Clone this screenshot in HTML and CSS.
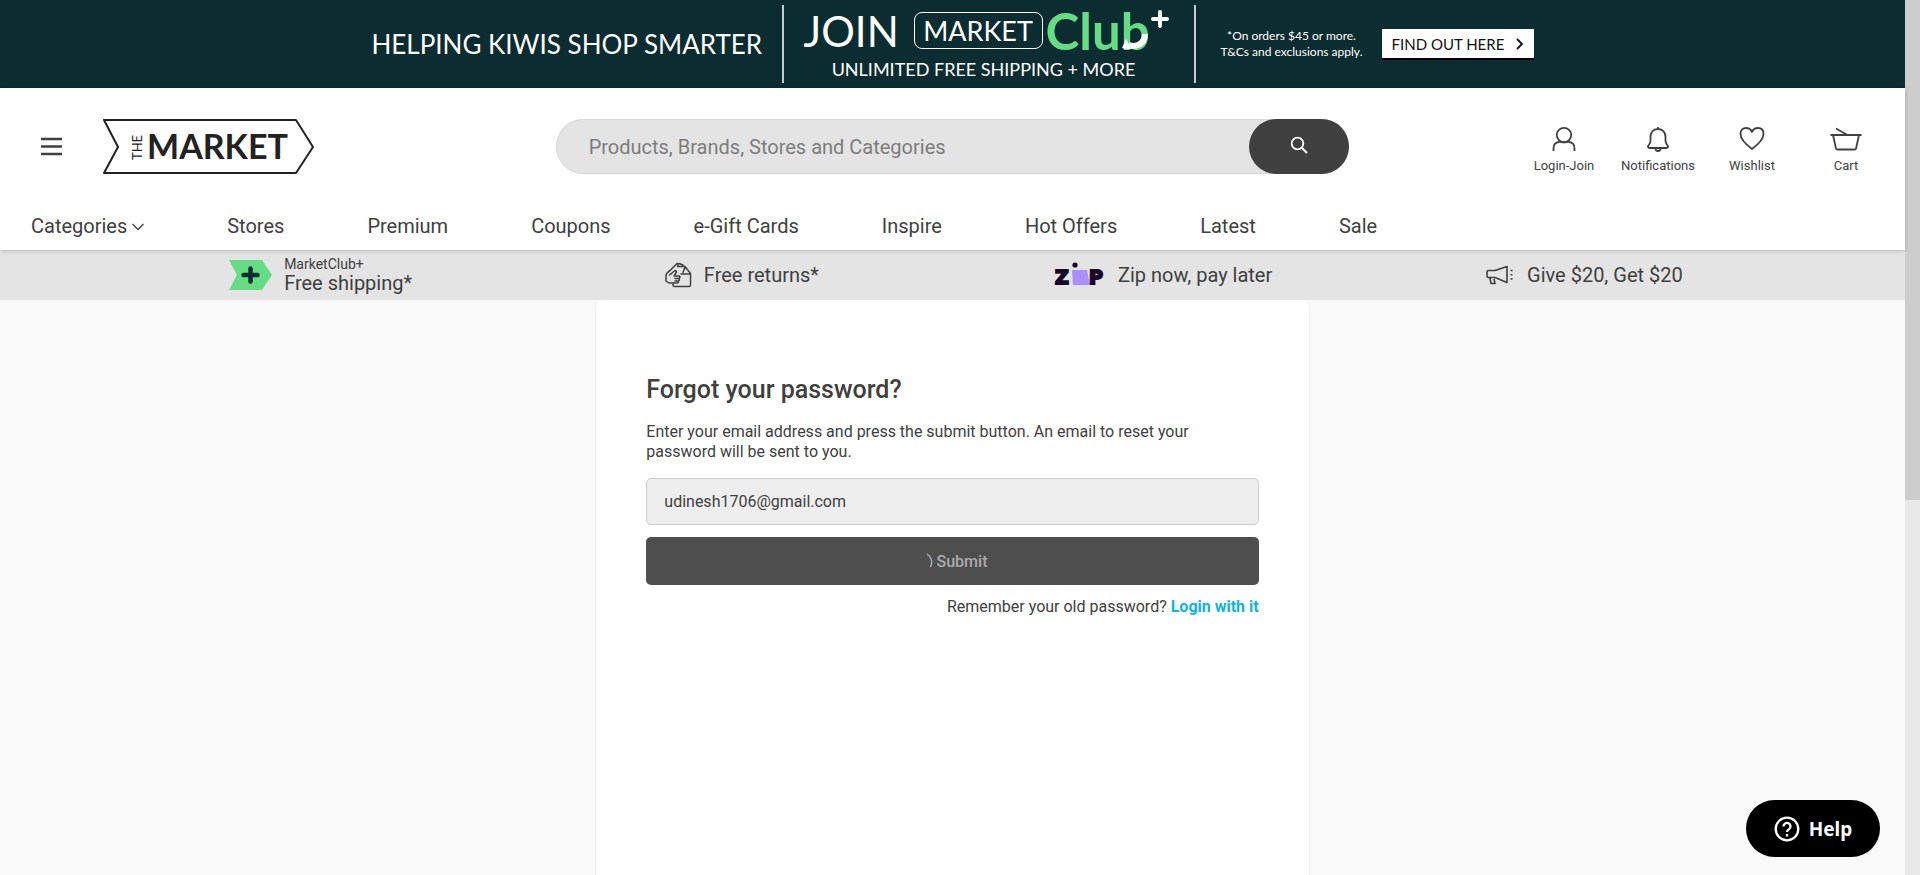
FILE: index.html
```html
<!DOCTYPE html>
<html lang="en">
<head>
<meta charset="utf-8">
<meta name="viewport" content="width=device-width, initial-scale=1">
<title>Forgot your password? | TheMarket</title>
<link rel="stylesheet" href="styles.css">
</head>
<body>
<div class="page">
  <aside class="banner">
    <p class="banner-tagline">HELPING KIWIS SHOP SMARTER</p>
    <div class="banner-join">
      <div class="join-row">
        <span class="join-word">JOIN</span>
        <span class="market-box">MARKET</span>
        <span class="club">Club<svg class="club-swoosh" width="30" height="26" viewBox="0 0 30 26" aria-hidden="true"><path d="M25 8C25 17 17 22 9 19" fill="none" stroke="#fff" stroke-width="6"/><path d="M2 22L6 13 12 23Q6 24 2 22z" fill="#fff"/></svg></span>
        <svg class="club-plus" width="20" height="20" viewBox="0 0 20 20" aria-hidden="true"><path d="M10 3v14M3 10h14" stroke="#fff" stroke-width="4" stroke-linecap="round"/></svg>
      </div>
      <p class="join-sub">UNLIMITED FREE SHIPPING + MORE</p>
    </div>
    <p class="banner-terms">*On orders $45 or more.<br>T&amp;Cs and exclusions apply.</p>
    <a class="banner-cta" href="#">FIND OUT HERE
      <svg width="8" height="12" viewBox="0 0 8 12" aria-hidden="true"><path d="M1 1l5 5-5 5" fill="none" stroke="#111" stroke-width="1.800"/></svg>
    </a>
  </aside>

  <header class="header">
    <div class="header-main">
      <div class="brand">
        <button class="menu-button" type="button" aria-label="Menu">
          <svg width="22" height="20" viewBox="0 0 22 20"><path d="M0 2h21M0 9.500h21M0 17h21" stroke="#404040" stroke-width="2.400"/></svg>
        </button>
        <a class="logo" href="#" aria-label="The Market">
          <svg width="213" height="56" viewBox="0 0 213 56">
            <path d="M2 1H194L211 28 194 54H2L16 28Z" fill="none" stroke="#222" stroke-width="2" stroke-linejoin="round"/>
            <text class="logo-the" transform="translate(40 41) rotate(-90)">THE</text>
            <text class="logo-market" x="45" y="40">MARKET</text>
          </svg>
        </a>
      </div>
      <form class="search">
        <input class="search-input" type="search" aria-label="Search" placeholder="Products, Brands, Stores and Categories">
        <button class="search-button" type="button" aria-label="Search">
          <svg width="18" height="18" viewBox="0 0 18 18"><circle cx="7.500" cy="7.500" r="5.800" fill="none" stroke="#fff" stroke-width="1.800"/><path d="M11.500 11.500l5.500 5.500" stroke="#fff" stroke-width="2"/></svg>
        </button>
      </form>
      <div class="actions">
        <a class="action" href="#">
          <svg width="32" height="26" viewBox="0 0 32 26"><circle cx="16" cy="9" r="7.200"/><path d="M5.500 25v-2.500q0-6 5.500-6.500l1.500-.4q3.500 1.600 7 0l1.500.4q5.500.5 5.500 6.500V25"/></svg>
          Login-Join
        </a>
        <a class="action" href="#">
          <svg width="32" height="26" viewBox="0 0 32 26"><path d="M16 1v2M16 3c-5 0-7.500 3.500-7.500 8v4c0 3-2.500 4-2.500 5.500S7 22 8 22h16c1 0 2-.2 2-1.500S23.500 18 23.500 15v-4c0-4.500-2.500-8-7.500-8z"/><path d="M13.500 22.500a2.500 2.500 0 0 0 5 0"/></svg>
          Notifications
        </a>
        <a class="action" href="#">
          <svg width="32" height="26" viewBox="0 0 32 26"><path d="M16 23C10 18.500 4.500 13.500 4.500 8c0-4 2.500-6 5.500-6 2.800 0 5 1.500 6 4 1-2.500 3.200-4 6-4 3 0 5.500 2 5.500 6 0 5.500-5.500 10.500-11.500 15z"/></svg>
          Wishlist
        </a>
        <a class="action" href="#">
          <svg width="32" height="26" viewBox="0 0 32 26"><path d="M0.500 9h31M3 9l3 13.500q.3 1 1.200 1H24.800q.9 0 1.200-1L29 9M6 2.500L17.500 9"/></svg>
          Cart
        </a>
      </div>
    </div>
    <nav class="nav">
      <a href="#">Categories <svg class="nav-chevron" width="12" height="8" viewBox="0 0 12 8" aria-hidden="true"><path d="M.5 1L6 6.500 11.500 1" fill="none" stroke="#404040" stroke-width="1.300"/></svg></a>
      <a href="#">Stores</a>
      <a href="#">Premium</a>
      <a href="#">Coupons</a>
      <a href="#">e-Gift Cards</a>
      <a href="#">Inspire</a>
      <a href="#">Hot Offers</a>
      <a href="#">Latest</a>
      <a href="#">Sale</a>
    </nav>
  </header>

  <section class="perks">
    <a class="perk" href="#">
      <svg width="43" height="30" viewBox="0 0 43 30" aria-hidden="true"><path d="M0 0H33L43 15 33 30H0L8 15Z" fill="#66dd84"/><path d="M21.500 8.500v13M14.500 15h14" stroke="#0b2c30" stroke-width="4.500" stroke-linecap="round"/></svg>
      <span class="perk-text"><small>MarketClub+</small>Free shipping*</span>
    </a>
    <a class="perk" href="#">
      <svg width="27" height="26" viewBox="0 0 27 26" aria-hidden="true" fill="none" stroke="#404040" stroke-width="1.500" stroke-linejoin="round" stroke-linecap="round"><path d="M5 8.500L12 1.500q1.500-.5 1 1.500l-.5 1.500H20l5.500 7V23q0 1.500-1.500 1.500H9.500Q8 24.500 8 23v-2M16 12h9.500M20 5l-2 5.500M14 1.500l4 1.500M5 8.500Q1 11 1 14v5l3 2h8.500q1.500-.5 1-2 1.500-1 .5-2.500 1.500-1 .5-2.500H9l2.500-4q0-1.500-1.500-1.500L4.500 13M10 16.500h4M10 19h3"/></svg>
      <span class="perk-text">Free returns*</span>
    </a>
    <a class="perk" href="#">
      <svg width="52" height="30" viewBox="0 0 52 30" role="img" aria-label="Zip"><path d="M18 10H33L36 25H19Z" fill="#aa8fff"/><circle cx="21" cy="5" r="2.600" fill="#1a0826"/><text class="zip-letter" x="1" y="24">Z</text><text class="zip-letter" x="35" y="24">P</text></svg>
      <span class="perk-text">Zip now, pay later</span>
    </a>
    <a class="perk" href="#">
      <svg width="29" height="20" viewBox="0 0 29 20" aria-hidden="true" fill="none" stroke="#404040" stroke-width="1.600" stroke-linejoin="round"><path d="M1 7q0-1.500 1.500-1.500H9L21 1.500v16L9 12.500H2.500Q1 12.500 1 11ZM4 13l1 5.500h4L8 14M24.500 5.500h2M24.500 9.800h2M24.500 14h2"/></svg>
      <span class="perk-text">Give $20, Get $20</span>
    </a>
  </section>

  <main class="main">
    <form class="card">
      <h1 class="card-title">Forgot your password?</h1>
      <p class="card-copy">Enter your email address and press the submit button. An email to reset your password will be sent to you.</p>
      <input class="email" type="email" aria-label="Email address" value="udinesh1706@gmail.com" readonly>
      <button class="submit" type="button"><svg width="16" height="16" viewBox="0 0 16 16" aria-hidden="true"><path d="M9 1Q16 6 12.500 14" fill="none" stroke="#aaa" stroke-width="1.500"/></svg>Submit</button>
      <p class="remember">Remember your old password? <a href="#">Login with it</a></p>
    </form>
  </main>
</div>
<div class="scroll-track"><div class="scroll-thumb"></div></div>
<button class="help" type="button">
  <svg width="26" height="26" viewBox="0 0 26 26" aria-hidden="true" fill="none" stroke="#fff" stroke-width="2.300"><circle cx="13" cy="13" r="11.300"/><path d="M9.500 10.500a3.500 3.500 0 1 1 5.500 2.800q-2 1.200-2 2.700M13 18v2.400"/></svg>
  Help
</button>
</body>
</html>
```
FILE: styles.css
```css
* {
  box-sizing: border-box;
}

body {
  margin: 0;
  min-height: 100vh;
  display: grid;
  grid-template-columns: 1fr 15px;
  background: #f9f9f9;
  color: #404040;
  font-family: Roboto, "Liberation Sans", sans-serif;
  font-size: 16px;
}

p,
h1 {
  margin: 0;
}

a {
  color: inherit;
  text-decoration: none;
}

button,
input {
  font: inherit;
  color: inherit;
}

svg {
  flex: none;
}

.page {
  display: flex;
  flex-direction: column;
}

/* Promotion banner */
.banner {
  height: 88px;
  padding: 4px 0 5px;
  display: flex;
  justify-content: center;
  align-items: center;
  background: #0b2c30;
  color: #fff;
  font-family: Lato, sans-serif;
}

.banner-tagline {
  width: 410px;
  font-size: 26px;
  line-height: 32px;
  white-space: nowrap;
}

.banner-join {
  width: 414px;
  height: 78px;
  padding-left: 20px;
  border: solid #c5cccd;
  border-width: 0 2px;
}

.join-row {
  height: 52px;
  display: flex;
  align-items: center;
}

.join-word {
  width: 110px;
  font-size: 42px;
  line-height: 48px;
}

.market-box {
  width: 129px;
  height: 37px;
  border: 1px solid #fff;
  border-radius: 8px;
  font-size: 27px;
  line-height: 36px;
  text-align: center;
}

.club {
  position: relative;
  margin-left: 3px;
  color: #66dd84;
  font-size: 51px;
  font-weight: 700;
  line-height: 48px;
}

.club-swoosh {
  position: absolute;
  right: 0;
  bottom: 3px;
}

.club-plus {
  align-self: flex-start;
  margin-top: 4px;
}

.join-sub {
  padding-right: 30px;
  font-size: 18px;
  line-height: 24px;
  text-align: center;
}

.banner-terms {
  width: 186px;
  padding-left: 6px;
  font-size: 12px;
  line-height: 16px;
  text-align: center;
}

.banner-cta {
  width: 152px;
  height: 29px;
  padding: 0 10px;
  display: flex;
  align-items: center;
  justify-content: space-between;
  background: #fff;
  box-shadow: 0 2px 0 #000;
  color: #111;
  font-size: 15px;
}

/* Header */
.header {
  position: relative;
  height: 162px;
  background: #fff;
  box-shadow: 0 1px 4px rgba(0, 0, 0, 0.2);
}

.header-main {
  padding-top: 31px;
  display: grid;
  grid-template-columns: 7fr 10fr 7fr;
}

.brand {
  height: 55px;
  padding-left: 41px;
  display: flex;
  align-items: center;
  gap: 39px;
}

.menu-button {
  padding: 0;
  border: 0;
  background: none;
  line-height: 0;
}

.logo {
  line-height: 0;
}

.logo-the {
  font: 400 13px Lato, sans-serif;
  fill: #222;
}

.logo-market {
  font: 700 34px Lato, sans-serif;
  fill: #222;
}

.search {
  height: 55px;
  display: flex;
  background: #e4e4e4;
  border-radius: 28px;
  box-shadow: inset 0 0 0 1px #d8d8d8;
}

.search-input {
  flex: 1;
  min-width: 0;
  padding: 0 33px;
  border: 0;
  outline: 0;
  background: none;
  font-size: 20px;
}

.search-input::placeholder {
  color: #7d7d7d;
}

.search-button {
  width: 100px;
  border: 0;
  border-radius: 28px;
  background: #404040;
}

.actions {
  padding: 7px 12px 0 0;
  display: flex;
  justify-content: flex-end;
}

.action {
  width: 94px;
  display: flex;
  flex-direction: column;
  align-items: center;
  gap: 6px;
  font-size: 13px;
  line-height: 16px;
}

.action svg {
  fill: none;
  stroke: #404040;
  stroke-width: 1.8px;
  stroke-linejoin: round;
}

.nav {
  padding: 38px 31px 0;
  display: flex;
  gap: 83px;
  font-size: 20px;
  line-height: 28px;
  white-space: nowrap;
}

.nav-chevron {
  vertical-align: 2px;
}

/* Benefits strip */
.perks {
  height: 50px;
  padding: 0 110px;
  display: grid;
  grid-template-columns: repeat(4, 1fr);
  background: #e4e4e4;
}

.perk {
  display: flex;
  justify-content: center;
  align-items: center;
  gap: 12px;
  font-size: 20px;
  line-height: 22px;
}

.perk-text small {
  display: block;
  font-size: 14px;
  line-height: 16px;
}

.zip-letter {
  font: 700 19px "DejaVu Sans", sans-serif;
  fill: #1a0826;
  stroke: #1a0826;
  stroke-width: 2px;
}

/* Password form */
.main {
  flex: 1;
  display: grid;
  grid-template-columns: 5fr 6fr 5fr;
}

.card {
  grid-column: 2;
  padding: 74px 50px;
  background: #fff;
  border: 1px solid #f0f0f0;
  border-width: 0 1px;
  border-radius: 8px 8px 0 0;
}

.card-title {
  margin-bottom: 16px;
  font-size: 25px;
  font-weight: 500;
  line-height: 32px;
}

.card-copy {
  margin-bottom: 16px;
  line-height: 20px;
}

.email {
  display: block;
  width: 100%;
  height: 47px;
  margin-bottom: 12px;
  padding: 0 17px;
  border: 1px solid #ccc;
  border-radius: 5px;
  outline: 0;
  background: #eee;
}

.submit {
  width: 100%;
  height: 48px;
  margin-bottom: 12px;
  display: flex;
  align-items: center;
  justify-content: center;
  gap: 3px;
  border: 0;
  border-radius: 5px;
  background: #4e4e4e;
  color: #aaa;
  font-weight: 500;
}

.remember {
  line-height: 20px;
  text-align: right;
}

.remember a {
  color: #0bb7dc;
  font-weight: 700;
}

/* Window furniture */
.scroll-track {
  background: #e8e8e8;
}

.scroll-thumb {
  height: 500px;
  background: #cdcdcd;
}

.help {
  position: fixed;
  right: 40px;
  bottom: 18px;
  width: 134px;
  height: 57px;
  display: flex;
  align-items: center;
  justify-content: center;
  gap: 9px;
  border: 0;
  border-radius: 29px;
  background: #000;
  color: #fff;
  font-family: "Noto Sans", sans-serif;
  font-size: 19px;
  font-weight: 700;
}
```
